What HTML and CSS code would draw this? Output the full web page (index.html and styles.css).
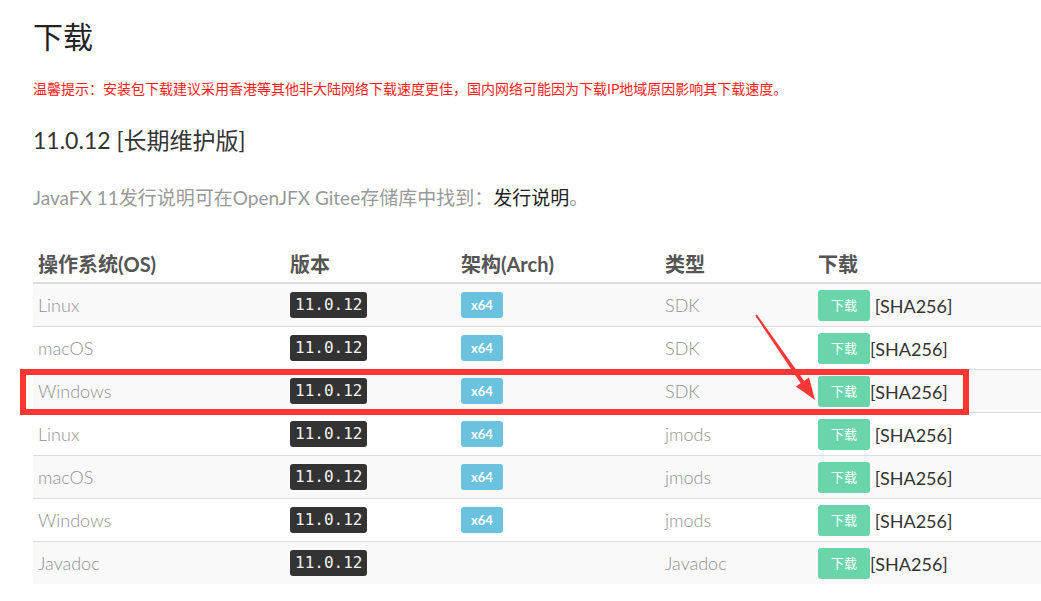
FILE: index.html
```html
<!DOCTYPE html>
<html>
  <head>
    <title>下载</title>
    <link rel="stylesheet" href="styles.css">
  </head>
  <body>
    <div class="page">
      <h1>下载</h1>
      <p class="notice">温馨提示：安装包下载建议采用香港等其他非大陆网络下载速度更佳，国内网络可能因为下载IP地域原因影响其下载速度。</p>
      <h3>11.0.12 [长期维护版]</h3>
      <p class="intro">JavaFX 11发行说明可在OpenJFX Gitee存储库中找到：<a href="#">发行说明</a>。</p>
      <table class="downloads">
        <thead>
          <tr>
            <th class="c-os">操作系统(OS)</th>
            <th class="c-ver">版本</th>
            <th class="c-arch">架构(Arch)</th>
            <th class="c-type">类型</th>
            <th>下载</th>
          </tr>
        </thead>
        <tbody>
          <tr>
            <td class="muted">Linux</td>
            <td><code class="ver">11.0.12</code></td>
            <td><span class="arch">x64</span></td>
            <td class="muted">SDK</td>
            <td><a class="btn" href="#">下载</a> <a class="sha" href="#">[SHA256]</a></td>
          </tr>
          <tr>
            <td class="muted">macOS</td>
            <td><code class="ver">11.0.12</code></td>
            <td><span class="arch">x64</span></td>
            <td class="muted">SDK</td>
            <td><a class="btn" href="#">下载</a><a class="sha" href="#">[SHA256]</a></td>
          </tr>
          <tr>
            <td class="muted">Windows</td>
            <td><code class="ver">11.0.12</code></td>
            <td><span class="arch">x64</span></td>
            <td class="muted">SDK</td>
            <td><a class="btn" href="#">下载</a><a class="sha" href="#">[SHA256]</a></td>
          </tr>
          <tr>
            <td class="muted">Linux</td>
            <td><code class="ver">11.0.12</code></td>
            <td><span class="arch">x64</span></td>
            <td class="muted">jmods</td>
            <td><a class="btn" href="#">下载</a> <a class="sha" href="#">[SHA256]</a></td>
          </tr>
          <tr>
            <td class="muted">macOS</td>
            <td><code class="ver">11.0.12</code></td>
            <td><span class="arch">x64</span></td>
            <td class="muted">jmods</td>
            <td><a class="btn" href="#">下载</a> <a class="sha" href="#">[SHA256]</a></td>
          </tr>
          <tr>
            <td class="muted">Windows</td>
            <td><code class="ver">11.0.12</code></td>
            <td><span class="arch">x64</span></td>
            <td class="muted">jmods</td>
            <td><a class="btn" href="#">下载</a> <a class="sha" href="#">[SHA256]</a></td>
          </tr>
          <tr>
            <td class="muted">Javadoc</td>
            <td><code class="ver">11.0.12</code></td>
            <td></td>
            <td class="muted">Javadoc</td>
            <td><a class="btn" href="#">下载</a><a class="sha" href="#">[SHA256]</a></td>
          </tr>
        </tbody>
      </table>
    </div>

    <!-- screenshot annotation -->
    <div class="mark-box"></div>
    <svg class="mark-arrow" width="1041" height="601" viewBox="0 0 1041 601">
      <polygon points="755.2,315.5 756.8,314.5 804.2,381 800.8,383.4" fill="#f93636"/>
      <polygon points="815,400 796,386.6 809,377.4" fill="#f93636"/>
    </svg>
  </body>
</html>
```

FILE: styles.css
```css
html, body {
  margin: 0;
  overflow: hidden;
}

body {
  position: relative;
  background: #fff;
  font-family: Lato, "Noto Sans CJK SC", sans-serif;
  color: #333;
}

.page {
  padding-left: 33px;
}

h1 {
  margin: 20px 0 0;
  font-size: 30px;
  line-height: 33px;
  font-weight: normal;
  color: #222;
}

.notice {
  margin: 26px 0 0;
  font-size: 14px;
  line-height: 20px;
  color: #ff1c1c;
}

h3 {
  margin: 28px 0 0;
  font-size: 23px;
  line-height: 27px;
  font-weight: normal;
  color: #333;
}

.intro {
  margin: 31px 0 0;
  font-size: 19px;
  line-height: 26px;
  color: #999;
}

.intro a {
  color: #222;
  text-decoration: none;
}

.downloads {
  margin-top: 36px;
  width: 1060px;
  border-collapse: collapse;
  font-size: 18px;
}

.downloads th {
  text-align: left;
  font-size: 20px;
  font-weight: bold;
  color: #555;
  padding: 5px;
  line-height: 25px;
  border-bottom: 2px solid #ddd;
}

.c-os { width: 242px; }
.c-ver { width: 161px; }
.c-arch { width: 194px; }
.c-type { width: 143px; }

.downloads td {
  padding: 5px;
  height: 32px;
  border-top: 1px solid #ddd;
  vertical-align: middle;
  white-space: nowrap;
}

.downloads tbody tr:nth-child(odd) {
  background: #f9f9f9;
}

.muted {
  color: #929292;
  font-weight: 300;
}

.ver {
  display: inline-block;
  background: #333;
  color: #f4f4f4;
  font-family: "DejaVu Sans Mono", monospace;
  font-size: 16px;
  line-height: 26px;
  padding: 0 5px;
  border-radius: 3px;
}

.arch {
  display: inline-block;
  background: #6bc2df;
  color: #fff;
  font-size: 13px;
  font-weight: bold;
  line-height: 26px;
  padding: 0 10px;
  border-radius: 3px;
}

.btn {
  display: inline-block;
  background: #6ad4aa;
  color: #fff;
  font-size: 13px;
  line-height: 31px;
  padding: 0 13px;
  border-radius: 3px;
  text-decoration: none;
  vertical-align: middle;
}

.sha {
  color: #333;
  text-decoration: none;
  vertical-align: middle;
}

.mark-box {
  position: absolute;
  left: 20px;
  top: 369px;
  width: 949px;
  height: 46px;
  box-sizing: border-box;
  border: 6px solid #fc3535;
}

.mark-arrow {
  position: absolute;
  left: 0;
  top: 0;
}
```
